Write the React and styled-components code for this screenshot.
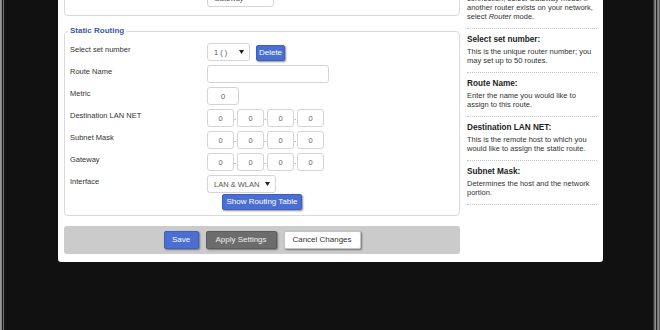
import React from "react";
import styled, { createGlobalStyle } from "styled-components";

const FONT = `"Liberation Sans", Arial, sans-serif`;

const GlobalStyle = createGlobalStyle`
  html, body { margin: 0; padding: 0; background: #111; }
  body { overflow: hidden; font-family: ${FONT}; }
  #root { width: 660px; height: 330px; }
`;

const Frame = styled.div`
  width: 660px;
  height: 330px;
  overflow: hidden;
  background: #111;
  box-sizing: border-box;
  padding-left: 58px;
  box-shadow:
    inset 1px 0 0 #9a9a9a,
    inset 2px 0 0 #7c7c7c,
    inset 3px 0 0 #1e1e1e,
    inset 4px 0 0 #707070,
    inset -1px 0 0 #5a5a5a,
    inset -2px 0 0 #8a8a8a,
    inset -3px 0 0 #7a7a7a,
    inset -4px 0 0 #222,
    inset -5px 0 0 #8c8c8c,
    inset -6px 0 0 #6a6a6a,
    inset -7px 0 0 #333;
`;

const Panel = styled.div`
  width: 545px;
  box-sizing: border-box;
  margin-top: -34px;
  background: #fff;
  border-radius: 0 0 3px 3px;
  padding: 6px 6px 8px;
  display: flex;
  gap: 7px;
  align-items: flex-start;
`;

const MainCol = styled.div`
  width: 396px;
  flex: none;
  display: flex;
  flex-direction: column;
  gap: 10px;
`;

const Group = styled.fieldset`
  margin: 0;
  min-width: 0;
  border: 1px solid #dadada;
  border-radius: 4px;
  padding: 7px 5px ${(p) => p.$pb}px;
`;

const Legend = styled.legend`
  padding: 0 2px;
  margin-left: -2px;
  font: bold 8px/10px ${FONT};
  color: #3b5aa6;
`;

const Rows = styled.div`
  display: flex;
  flex-direction: column;
  gap: 4px;
`;

const Row = styled.div`
  display: flex;
  align-items: flex-start;
  height: 18px;
`;

const Label = styled.div`
  width: 137px;
  flex: none;
  font-size: 7.5px;
  line-height: 14px;
  color: #333;
  white-space: nowrap;
`;

const Controls = styled.div`
  display: flex;
  align-items: flex-start;
  gap: ${(p) => p.$gap ?? 6}px;
`;

const TextInput = styled.input`
  box-sizing: border-box;
  width: ${(p) => p.$w}px;
  height: 18px;
  margin: 0;
  border: 1px solid #d4d4d4;
  border-radius: 3px;
  background: #fff;
  font: 7.5px/16px ${FONT};
  color: #666;
  text-align: ${(p) => (p.$center ? "center" : "left")};
  padding: 0 4px;
  outline: none;
`;

const SelectBox = styled.div`
  box-sizing: border-box;
  width: ${(p) => p.$w}px;
  height: 18px;
  border: 1px solid #d4d4d4;
  border-radius: 3px;
  background: #fff;
  display: flex;
  align-items: center;
  justify-content: space-between;
  padding: 0 5px 0 6px;
  font-size: 7.5px;
  color: #555;
  white-space: nowrap;
`;

const Dot = styled.span`
  width: 3px;
  flex: none;
  font-size: 8px;
  line-height: 18px;
  color: #444;
`;

const Button = styled.button`
  box-sizing: border-box;
  width: ${(p) => p.$w}px;
  height: ${(p) => p.$h}px;
  margin: ${(p) => p.$mt ?? 0}px 0 0;
  padding: 0;
  font: 8px/1 ${FONT};
  border-radius: 2px;
  white-space: nowrap;
  cursor: pointer;
  box-shadow: 1px 1px 2px rgba(0, 0, 0, 0.45);
  border: 1px solid
    ${(p) =>
      p.$variant === "dark" ? "#5b5b5b" : p.$variant === "light" ? "#c4c4c4" : "#3d5fc2"};
  background: ${(p) =>
    p.$variant === "dark" ? "#6c6c6c" : p.$variant === "light" ? "#fff" : "#4a6fd1"};
  color: ${(p) =>
    p.$variant === "dark" ? "#f0f0f0" : p.$variant === "light" ? "#333" : "#fff"};
`;

const CenterRow = styled.div`
  display: flex;
  justify-content: center;
`;

const ButtonBar = styled.div`
  height: 28px;
  background: #cbcbcb;
  border-radius: 3px;
  display: flex;
  justify-content: center;
  align-items: center;
  gap: 7px;
`;

const HelpCol = styled.div`
  width: 130px;
  flex: none;
`;

const HelpItem = styled.div`
  padding: 6px 0 7px;
  border-bottom: 1px dotted #c4c4c4;
  &:first-child {
    padding-top: 1px;
  }
`;

const HelpTitle = styled.div`
  font: bold 8.2px/10px ${FONT};
  color: #222;
  margin-bottom: 2px;
  white-space: nowrap;
`;

const HelpLine = styled.div`
  font-size: 7.5px;
  line-height: 9px;
  color: #333;
  white-space: nowrap;
`;

function Arrow() {
  return (
    <svg width="5" height="4" viewBox="0 0 5 4">
      <polygon points="0,0 5,0 2.5,4" fill="#222" />
    </svg>
  );
}

function IpField() {
  return (
    <Controls $gap={0}>
      <TextInput $w={27} $center readOnly value="0" />
      <Dot>.</Dot>
      <TextInput $w={27} $center readOnly value="0" />
      <Dot>.</Dot>
      <TextInput $w={27} $center readOnly value="0" />
      <Dot>.</Dot>
      <TextInput $w={27} $center readOnly value="0" />
    </Controls>
  );
}

const help = [
  {
    title: "Operating Mode:",
    lines: [
      "If this router is hosting your Internet",
      "connection, select Gateway mode. If",
      "another router exists on your network,",
      <>
        select <i>Router</i> mode.
      </>,
    ],
  },
  {
    title: "Select set number:",
    lines: ["This is the unique router number; you", "may set up to 50 routes."],
  },
  {
    title: "Route Name:",
    lines: ["Enter the name you would like to", "assign to this route."],
  },
  {
    title: "Destination LAN NET:",
    lines: ["This is the remote host to which you", "would like to assign the static route."],
  },
  {
    title: "Subnet Mask:",
    lines: ["Determines the host and the network", "portion."],
  },
];

export default function App() {
  return (
    <>
      <GlobalStyle />
      <Frame>
        <Panel>
          <MainCol>
            <Group $pb={8}>
              <Legend>Dynamic Routing</Legend>
              <Row>
                <Label>Operating Mode</Label>
                <SelectBox $w={67}>
                  <span>Gateway</span>
                  <Arrow />
                </SelectBox>
              </Row>
            </Group>

            <Group $pb={5}>
              <Legend>Static Routing</Legend>
              <Rows>
                <Row>
                  <Label>Select set number</Label>
                  <Controls>
                    <SelectBox $w={43}>
                      <span>1 ( )</span>
                      <Arrow />
                    </SelectBox>
                    <Button $w={29} $h={16} $mt={2}>
                      Delete
                    </Button>
                  </Controls>
                </Row>
                <Row>
                  <Label>Route Name</Label>
                  <TextInput $w={122} readOnly value="" />
                </Row>
                <Row>
                  <Label>Metric</Label>
                  <TextInput $w={32} $center readOnly value="0" />
                </Row>
                <Row>
                  <Label>Destination LAN NET</Label>
                  <IpField />
                </Row>
                <Row>
                  <Label>Subnet Mask</Label>
                  <IpField />
                </Row>
                <Row>
                  <Label>Gateway</Label>
                  <IpField />
                </Row>
                <Row>
                  <Label>Interface</Label>
                  <SelectBox $w={69}>
                    <span>LAN &amp; WLAN</span>
                    <Arrow />
                  </SelectBox>
                </Row>
              </Rows>
              <CenterRow>
                <Button $w={80} $h={16} $mt={1}>
                  Show Routing Table
                </Button>
              </CenterRow>
            </Group>

            <ButtonBar>
              <Button $w={35} $h={18}>
                Save
              </Button>
              <Button $w={71} $h={18} $variant="dark">
                Apply Settings
              </Button>
              <Button $w={77} $h={18} $variant="light">
                Cancel Changes
              </Button>
            </ButtonBar>
          </MainCol>

          <HelpCol>
            {help.map((h) => (
              <HelpItem key={h.title}>
                <HelpTitle>{h.title}</HelpTitle>
                {h.lines.map((l, i) => (
                  <HelpLine key={i}>{l}</HelpLine>
                ))}
              </HelpItem>
            ))}
          </HelpCol>
        </Panel>
      </Frame>
    </>
  );
}
